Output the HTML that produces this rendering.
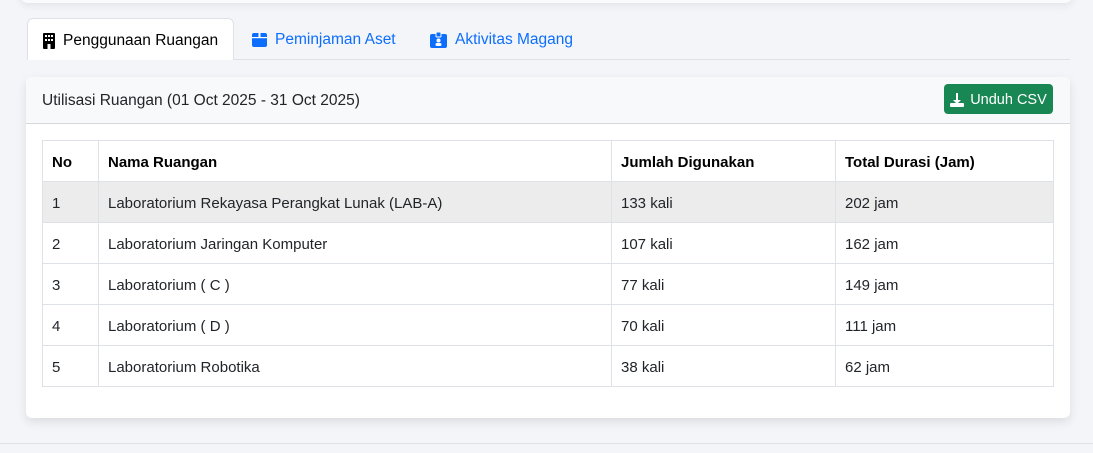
<!DOCTYPE html><html><head><style>
body{margin:0;width:1093px;height:453px;background:#f4f5f9;font-family:"Liberation Sans",sans-serif;font-size:15px;color:#212529;position:relative;overflow:hidden}
.top{position:absolute;left:20px;right:20px;top:-30px;height:33px;background:#fafbfc;border-radius:8px;box-shadow:0 3px 8px rgba(0,0,0,.07)}
.nav{position:absolute;left:27px;top:59px;width:1043px;border-top:1px solid #dee2e6}
.tab{position:absolute;top:19px;height:41px;line-height:41px;font-size:15.5px;color:#0d6efd;display:flex;align-items:center;gap:8px}
.tab.a{top:18px;left:27px;width:207px;background:#fff;border:1px solid #dee2e6;border-bottom:none;border-radius:6px 6px 0 0;color:#000;box-sizing:border-box;padding-left:15px;padding-top:2px;height:42px}
.card{position:absolute;left:26px;top:77px;width:1044px;height:341px;background:#fff;border-radius:6px;box-shadow:0 4px 10px rgba(0,0,0,.1);overflow:hidden}
.hd{height:47px;background:#f8f9fa;border-bottom:1px solid #d6d8db;display:flex;align-items:center;padding-left:16px;padding-top:2px;box-sizing:border-box;font-size:15.5px}
.btn{position:absolute;left:918px;top:7px;width:109px;height:30px;background:#198754;color:#fff;border-radius:4px;font-size:14.5px;display:flex;align-items:center;justify-content:center;gap:6px;padding-top:2px;box-sizing:border-box}
table{position:absolute;left:16px;top:63px;border-collapse:collapse;width:1012px}
tr{height:41px}
td,th{border:1px solid #dee2e6;padding:2px 9px 0;text-align:left;font-size:15px}
th{font-weight:bold;color:#000}
tr.g td{background:#ececec}
.foot{position:absolute;left:0;right:0;top:443px;border-top:1px solid #dee2e6}
</style></head><body>
<div class="top"></div>
<div class="nav"></div>
<div class="tab a"><svg width="12" height="16" viewBox="0 0 12 16"><rect width="12" height="16" rx="1" fill="#000"/><g fill="#fff"><rect x="2" y="2" width="2" height="2"/><rect x="5" y="2" width="2" height="2"/><rect x="8" y="2" width="2" height="2"/><rect x="2" y="6" width="2" height="2"/><rect x="5" y="6" width="2" height="2"/><rect x="8" y="6" width="2" height="2"/><rect x="4.5" y="11" width="3" height="5"/></g></svg>Penggunaan Ruangan</div>
<div class="tab" style="left:252px"><svg width="15" height="14" viewBox="0 0 15 14"><rect x="0" y="0" width="15" height="14" rx="2" fill="#0d6efd"/><rect x="0" y="4" width="15" height="1.2" fill="#fff"/><rect x="6.5" y="0" width="2" height="4" fill="#fff"/></svg>Peminjaman Aset</div>
<div class="tab" style="left:430px"><svg width="17" height="16" viewBox="0 0 17 16"><rect x="0" y="2" width="17" height="14" rx="2" fill="#0d6efd"/><rect x="6" y="0" width="5" height="5" rx="1" fill="#0d6efd" stroke="#fff" stroke-width="1"/><circle cx="8.5" cy="8.5" r="2" fill="#fff"/><rect x="5.5" y="11" width="6" height="3" rx="1.5" fill="#fff"/></svg>Aktivitas Magang</div>
<div class="card">
<div class="hd">Utilisasi Ruangan (01 Oct 2025 - 31 Oct 2025)</div>
<div class="btn"><svg width="14" height="14" viewBox="0 0 14 14"><path d="M6 0h2v7h3l-4 4-4-4h3z" fill="#fff"/><rect x="0" y="10" width="14" height="4" rx="1" fill="#fff"/></svg>Unduh CSV</div>
<table>
<colgroup><col style="width:56px"><col style="width:513px"><col style="width:224px"><col></colgroup>
<tr><th>No</th><th>Nama Ruangan</th><th>Jumlah Digunakan</th><th>Total Durasi (Jam)</th></tr>
<tr class="g"><td>1</td><td>Laboratorium Rekayasa Perangkat Lunak (LAB-A)</td><td>133 kali</td><td>202 jam</td></tr>
<tr><td>2</td><td>Laboratorium Jaringan Komputer</td><td>107 kali</td><td>162 jam</td></tr>
<tr><td>3</td><td>Laboratorium ( C )</td><td>77 kali</td><td>149 jam</td></tr>
<tr><td>4</td><td>Laboratorium ( D )</td><td>70 kali</td><td>111 jam</td></tr>
<tr><td>5</td><td>Laboratorium Robotika</td><td>38 kali</td><td>62 jam</td></tr>
</table>
</div>
<div class="foot"></div>
</body></html>
